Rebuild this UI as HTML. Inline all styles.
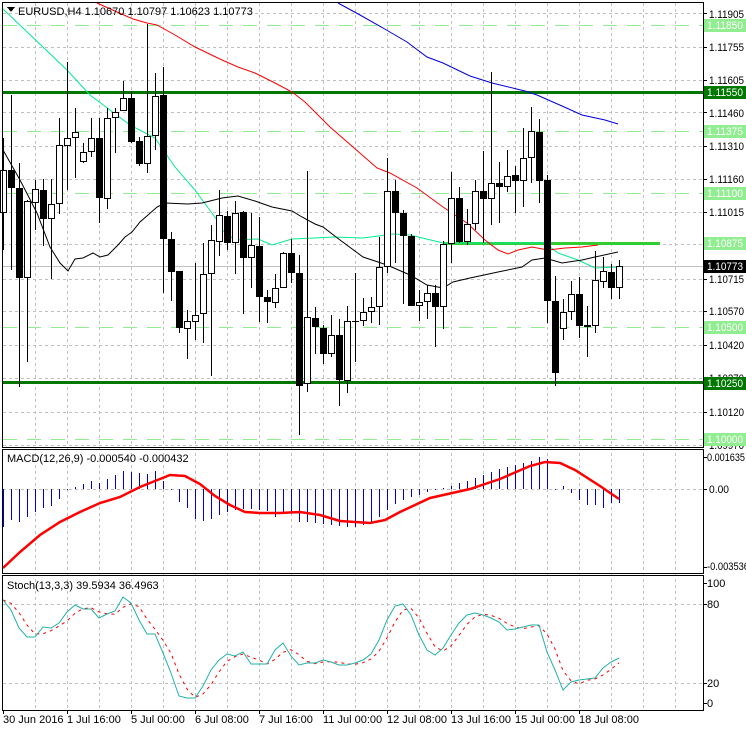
<!DOCTYPE html>
<html><head><meta charset="utf-8"><style>
html,body{margin:0;padding:0;background:#fff;}
body{width:746px;height:731px;overflow:hidden;position:relative;font-family:"Liberation Sans",sans-serif;font-size:11px;}
svg{position:absolute;left:0;top:0;}
svg text{font-family:"Liberation Sans",sans-serif;font-size:11px;}
</style></head><body>
<svg id="s" width="746" height="731" viewBox="0 0 746 731" shape-rendering="crispEdges">
<g id="grid" stroke="#c0c0c0" stroke-dasharray="3,3" stroke-width="1"></g>
<g id="lev"></g>
<g id="ma" fill="none" shape-rendering="auto"></g>
<g id="cdl"></g>
<g id="mac"></g>
<g id="sto" fill="none" shape-rendering="auto"></g>
<g fill="none" stroke="#000" stroke-width="1">
<rect x="2.5" y="2.5" width="701" height="445"/>
<rect x="2.5" y="449.5" width="701" height="124"/>
<rect x="2.5" y="575.5" width="701" height="135"/>
</g>
<polygon points="7,7 15,7 11,12" fill="#000"/>
<text x="18" y="15" fill="#000">EURUSD,H4  1.10670 1.10797 1.10623 1.10773</text>
<text x="7" y="462" fill="#000">MACD(12,26,9) -0.000540 -0.000432</text>
<text x="7" y="589" fill="#000">Stoch(13,3,3) 39.5934 36.4963</text>
<g id="ax"></g>
<g fill="#000">
<text x="3" y="723">30 Jun 2016</text>
<text x="67" y="723">1 Jul 16:00</text>
<text x="131" y="723">5 Jul 00:00</text>
<text x="195" y="723">6 Jul 08:00</text>
<text x="259" y="723">7 Jul 16:00</text>
<text x="323" y="723">11 Jul 00:00</text>
<text x="387" y="723">12 Jul 08:00</text>
<text x="451" y="723">13 Jul 16:00</text>
<text x="515" y="723">15 Jul 00:00</text>
<text x="579" y="723">18 Jul 08:00</text>
</g>
<g fill="#000" lengthAdjust="spacingAndGlyphs">
<text x="709" y="18" textLength="35" lengthAdjust="spacingAndGlyphs">1.11905</text>
<text x="709" y="51" textLength="35" lengthAdjust="spacingAndGlyphs">1.11755</text>
<text x="709" y="84" textLength="35" lengthAdjust="spacingAndGlyphs">1.11605</text>
<text x="709" y="117" textLength="35" lengthAdjust="spacingAndGlyphs">1.11460</text>
<text x="709" y="150" textLength="35" lengthAdjust="spacingAndGlyphs">1.11310</text>
<text x="709" y="183" textLength="35" lengthAdjust="spacingAndGlyphs">1.11160</text>
<text x="709" y="216" textLength="35" lengthAdjust="spacingAndGlyphs">1.11015</text>
<text x="709" y="248" textLength="35" lengthAdjust="spacingAndGlyphs">1.10870</text>
<text x="709" y="283" textLength="35" lengthAdjust="spacingAndGlyphs">1.10715</text>
<text x="709" y="315" textLength="35" lengthAdjust="spacingAndGlyphs">1.10570</text>
<text x="709" y="349" textLength="35" lengthAdjust="spacingAndGlyphs">1.10420</text>
<text x="709" y="382" textLength="35" lengthAdjust="spacingAndGlyphs">1.10270</text>
<text x="709" y="416" textLength="35" lengthAdjust="spacingAndGlyphs">1.10120</text>
<text x="709" y="449" textLength="35" lengthAdjust="spacingAndGlyphs">1.09970</text>
<text x="707" y="461" textLength="38" lengthAdjust="spacingAndGlyphs">0.001635</text>
<text x="709" y="493" textLength="20" lengthAdjust="spacingAndGlyphs">0.00</text>
<text x="707" y="570" textLength="42" lengthAdjust="spacingAndGlyphs">-0.003536</text>
<text x="707" y="587">100</text>
<text x="707" y="608">80</text>
<text x="707" y="687">20</text>
<text x="707" y="707">0</text>
</g>
<g id="lab"></g>
</svg>
<script>
var NS="http://www.w3.org/2000/svg";
function el(p,t,a,txt){var e=document.createElementNS(NS,t);for(var k in a)e.setAttribute(k,a[k]);if(txt)e.textContent=txt;document.getElementById(p).appendChild(e);return e;}
for(var x=35;x<=675;x+=32){el('grid','line',{x1:x+.5,y1:3,x2:x+.5,y2:710});}
[13,47,80,112,146,179,212,244,279,311,345,378,412,445,489,604,683].forEach(function(y){el('grid','line',{x1:3,y1:y+.5,x2:703,y2:y+.5});});
[13,47,80,112,146,179,212,244,279,311,345,378,412,445,457,489,567,583,604,683,703].forEach(function(y){el('ax','line',{x1:703,y1:y+.5,x2:707,y2:y+.5,stroke:'#000'});});
[3,67,131,195,259,323,387,451,515,579].forEach(function(x){el('ax','line',{x1:x+.5,y1:710,x2:x+.5,y2:714,stroke:'#000'});});
el('lev','line',{x1:3,y1:266.5,x2:703,y2:266.5,stroke:'#c0c0c0'});
[25,131,193,327,439].forEach(function(y){el('lev','line',{x1:3,y1:y+.5,x2:703,y2:y+.5,stroke:'#90ee90','stroke-dasharray':'14,10'});});
el('lev','rect',{x:3,y:91,width:700,height:3,fill:'#007800'});
el('lev','rect',{x:3,y:381,width:700,height:3,fill:'#007800'});
el('lev','rect',{x:443,y:242,width:217,height:3,fill:'#32cd32'});
function pl(g,pts,col,w,extra){var a={points:pts.map(function(p){return p.join(',')}).join(' '),stroke:col,'stroke-width':w||1,fill:'none'};for(var k in extra)a[k]=extra[k];el(g,'polyline',a);}
pl('ma',[[2,8],[67,70],[90,95],[130,125],[155,138],[175,167],[195,190],[217,220],[222,230],[235,240],[258,239],[272,245],[292,239],[315,238],[333,237],[363,238],[393,234],[410,235],[443,243],[545,243],[558,253],[578,260],[595,268],[618,267]],'#00ee90');
pl('ma',[[3,150],[20,180],[37,213],[50,247],[60,263],[68,271],[75,259],[83,258],[93,253],[100,257],[108,255],[118,245],[125,237],[132,232],[140,222],[148,215],[157,207],[165,203],[188,204],[202,203],[222,198],[238,196],[255,201],[272,207],[292,211],[302,217],[315,224],[323,227],[340,240],[363,257],[387,265],[410,275],[427,285],[443,288],[453,282],[470,278],[498,272],[522,267],[532,260],[545,258],[562,263],[582,260],[595,257],[618,252]],'#000');
pl('ma',[[97,3],[117,12],[133,19],[147,23],[157,25],[175,35],[195,47],[222,60],[238,67],[255,73],[275,83],[292,92],[305,102],[315,112],[330,127],[353,147],[377,168],[390,173],[417,188],[443,207],[467,223],[485,240],[498,250],[508,254],[518,250],[532,247],[548,250],[565,248],[582,247],[598,245]],'#f00');
pl('ma',[[338,3],[360,15],[383,28],[407,42],[427,57],[443,63],[470,76],[492,83],[525,91],[537,95],[562,106],[582,115],[605,120],[618,124]],'#0000dd');
var C=[[138,250,170,213,1],[95,270,170,188,0],[163,387,188,278,0],[200,362,201,278,1],[180,230,189,203,1],[179,246,190,219,0],[179,279,204,219,1],[118,214,145,204,1],[62,190,138,146,1],[108,178,132,138,1],[143,163,152,162,1],[118,157,138,152,1],[118,223,138,198,0],[108,209,118,199,1],[108,153,112,118,1],[81,111,98,111,1],[91,143,98,142,0],[137,166,141,164,0],[24,173,136,164,1],[73,150,96,136,1],
[67,293,95,239,0],[232,301,239,272,0],[271,333,271,328,0],[310,359,321,329,1],[263,340,315,322,1],[243,343,274,314,1],[225,376,240,274,1],[190,256,215,242,1],[211,250,216,243,0],[201,274,213,243,1],[211,314,212,258,0],[213,288,245,258,1],[217,322,246,297,0],[290,323,297,302,0],[274,308,288,303,1],[252,288,253,288,1],[239,283,253,273,0],[255,435,273,386,0],[171,392,317,384,1],
[307,354,318,327,0],[325,364,328,354,0],[315,357,335,354,1],[319,406,335,380,0],[306,393,321,381,1],[273,362,321,321,2],[298,326,312,321,1],[297,323,307,312,1],[237,325,267,307,1],[158,273,191,267,1],[180,263,191,213,0],[210,304,213,236,0],[234,306,236,306,0],[290,321,302,306,1],[285,319,293,302,1],[285,347,293,307,0],[241,329,244,307,1],[172,263,198,244,1],[187,243,198,242,0],[209,245,224,242,1],
[180,230,191,224,1],[151,243,191,199,0],[72,225,183,199,1],[162,223,183,187,0],[150,192,176,187,1],[166,213,175,181,0],[128,207,158,181,1],[107,183,131,158,1],[119,203,132,181,0],[175,323,180,301,0],[276,386,301,373,0],[299,340,312,329,1],[281,320,294,312,1],[277,338,294,326,0],[306,357,325,327,0],[251,333,280,326,1],[257,288,271,282,1],[264,299,272,288,0],[260,299,266,288,1]];
C.forEach(function(c,i){var x=3+8*i;
 el('cdl','rect',{x:x,y:c[0],width:1,height:c[1]-c[0],fill:'#000'});
 var h=c[3]-c[2];
 if(c[4]==2||h<2){el('cdl','rect',{x:x-3,y:c[2],width:7,height:1,fill:'#000'});}
 else if(c[4]==1){el('cdl','rect',{x:x-3+.5,y:c[2]+.5,width:6,height:h-1,fill:'#fff',stroke:'#000'});}
 else{el('cdl','rect',{x:x-3,y:c[2],width:7,height:h,fill:'#000'});}
});
var H=[527,520,522,517,512,508,506,499,490,487,484,481,483,479,475,471,472,473,474,471,481,489,502,508,519,521,519,515,512,510,509,509,510,511,517,514,512,522,522,523,524,525,526,527,527,525,522,517,510,504,500,497,495,492,490,488,486,483,481,478,475,472,469,467,465,463,461,457,459,489,486,493,500,505,505,508,503,503];
H.forEach(function(v,i){var x=3+8*i;var a=Math.min(v,489),b=Math.max(v,489);el('mac','rect',{x:x,y:a,width:1,height:Math.max(b-a,1),fill:'#0000cc'});});
pl('mac',[[3,568],[20,552],[40,535],[60,522],[80,512],[100,503],[120,497],[140,487],[160,479],[170,475],[185,476],[200,484],[215,496],[230,505],[245,512],[260,513],[280,513],[300,512],[320,515],[340,521],[370,523],[385,520],[400,512],[430,498],[470,489],[500,479],[530,466],[545,462],[560,463],[575,470],[600,486],[619,499]],'#f00',2.5,{'shape-rendering':'auto'});
var K=[600,610,628,637,637,627,628,623,612,605,609,609,618,614,611,597,603,620,634,634,653,673,696,698,698,686,670,660,654,656,652,664,664,664,650,643,656,665,663,663,660,662,665,665,663,660,654,640,620,606,604,615,635,650,655,648,635,623,615,613,615,618,622,630,629,627,625,625,652,670,690,682,680,679,678,668,662,658];
var kp=K.map(function(y,i){return [3+8*i,y]});
var dp=K.map(function(y,i){var a=K[Math.max(i-1,0)],b=K[Math.max(i-2,0)];return [3+8*i,((y+a+b)/3).toFixed(1)]});
pl('sto',dp,'#f00',1,{'stroke-dasharray':'3,4'});
pl('sto',kp,'#20b2aa',1);
function lab(y,bg,fg,t){el('lab','rect',{x:704,y:y-6,width:42,height:13,fill:bg});el('lab','text',{x:707,y:y+4,fill:fg,textLength:36,lengthAdjust:'spacingAndGlyphs'},t);}
lab(25,'#90ee90','#fff','1.11850');
lab(92,'#007800','#fff','1.11550');
lab(131,'#90ee90','#fff','1.11375');
lab(193,'#90ee90','#fff','1.11100');
lab(243,'#90ee90','#fff','1.10875');
lab(266,'#000','#fff','1.10773');
lab(327,'#90ee90','#fff','1.10500');
lab(383,'#007800','#fff','1.10250');
lab(439,'#90ee90','#fff','1.10000');
</script>
</body></html>
